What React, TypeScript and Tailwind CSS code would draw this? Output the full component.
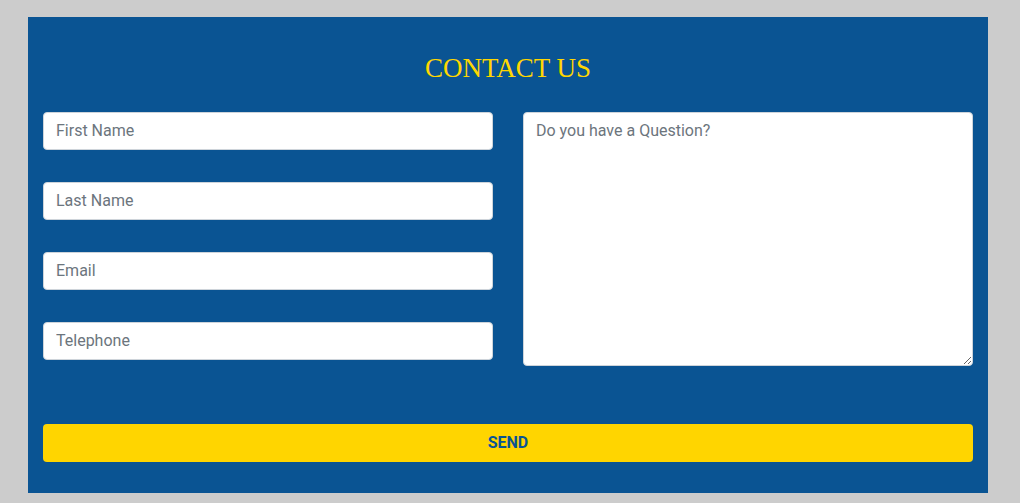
const fields = ["First Name", "Last Name", "Email", "Telephone"];

const inputClass =
  "block w-full h-[38px] rounded-[4px] border border-[#ced4da] bg-white px-[12px] pb-[2px] text-[16px] text-[#495057] placeholder:text-[#6c757d] outline-none";

export default function App() {
  return (
    <div className="min-h-[503px] bg-[#cccccc] pl-[28px] pt-[17px] pb-[10px] font-['Roboto',sans-serif]">
      <section className="w-[960px] bg-[#0a5493] px-[15px] pt-[36px] pb-[31px]">
        <h2 className="mb-[28px] text-center font-['Liberation_Serif',serif] text-[27px] leading-[31px] text-[#ffd700]">
          CONTACT US
        </h2>

        <form className="flex flex-col" onSubmit={(e) => e.preventDefault()}>
          <div className="grid grid-cols-2 gap-[30px]">
            <div className="flex flex-col gap-[32px]">
              {fields.map((f) => (
                <input key={f} type="text" placeholder={f} className={inputClass} />
              ))}
            </div>
            <textarea
              placeholder="Do you have a Question?"
              className="block h-[254px] w-full rounded-[4px] border border-[#ced4da] bg-white px-[12px] py-[6px] text-[16px] leading-[24px] text-[#495057] placeholder:text-[#6c757d] outline-none"
            />
          </div>

          <button
            type="submit"
            className="mt-[58px] h-[38px] w-full rounded-[4px] bg-[#ffd500] text-[16px] font-bold text-[#0a5493]"
          >
            SEND
          </button>
        </form>
      </section>
    </div>
  );
}
